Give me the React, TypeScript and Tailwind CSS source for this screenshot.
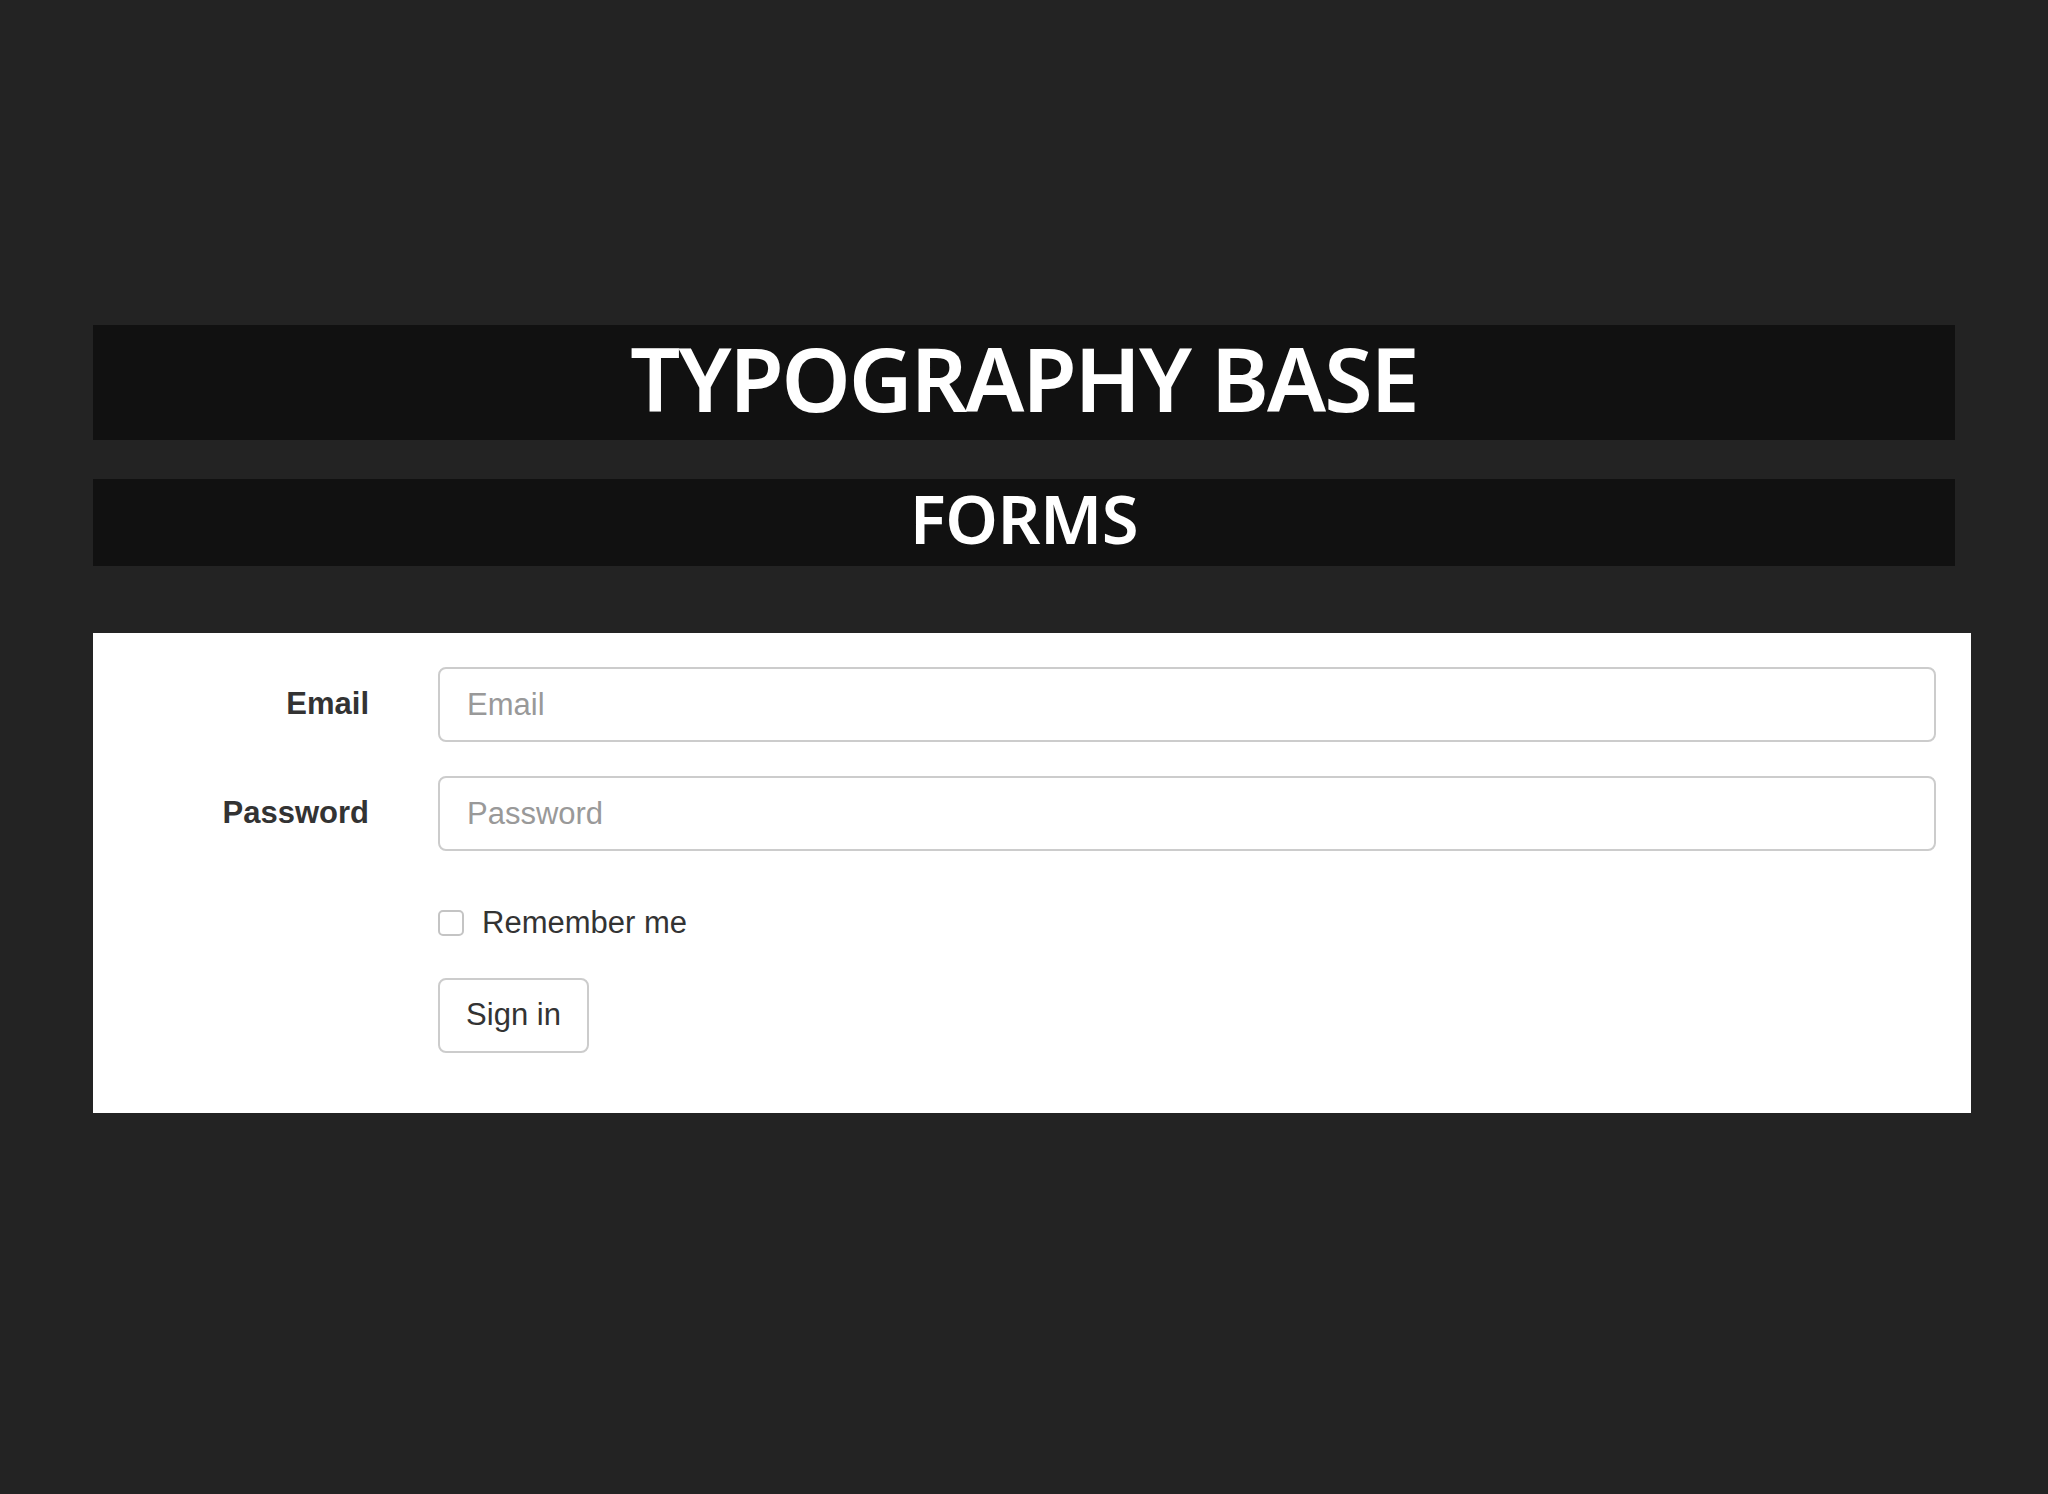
export default function App() {
  return (
    <div className="min-h-screen w-full bg-[#232323] pt-[325px] px-[93px]">
      {/* Section headings */}
      <div className="w-[1862px] h-[115px] pb-[10px] bg-[#111111] flex items-center justify-center">
        <h1 className="text-[88px] leading-none font-semibold text-white tracking-[-2px] font-['Noto_Sans',sans-serif]">
          TYPOGRAPHY BASE
        </h1>
      </div>
      <div className="w-[1862px] h-[87px] pb-[8px] mt-[39px] bg-[#111111] flex items-center justify-center">
        <h2 className="text-[67px] leading-none font-semibold text-white tracking-[-0.5px] font-['Noto_Sans',sans-serif]">
          FORMS
        </h2>
      </div>

      {/* Form panel */}
      <div className="w-[1878px] h-[480px] mt-[67px] bg-white pt-[34px] pr-[35px] font-['Liberation_Sans',Arial,sans-serif]">
        <form className="flex flex-col">
          <div className="flex items-center gap-[69px]">
            <label className="w-[276px] text-right text-[31px] font-bold text-[#333333]">Email</label>
            <input
              type="email"
              placeholder="Email"
              className="flex-1 h-[75px] px-[27px] text-[31px] text-[#555] placeholder:text-[#999999] border-2 border-[#cccccc] rounded-[8px] outline-none"
            />
          </div>
          <div className="flex items-center gap-[69px] mt-[34px]">
            <label className="w-[276px] text-right text-[31px] font-bold text-[#333333]">Password</label>
            <input
              type="password"
              placeholder="Password"
              className="flex-1 h-[75px] px-[27px] text-[31px] text-[#555] placeholder:text-[#999999] border-2 border-[#cccccc] rounded-[8px] outline-none"
            />
          </div>
          <div className="pl-[345px] mt-[56px] flex items-center gap-[18px]">
            <span className="w-[26px] h-[26px] rounded-[5px] border-2 border-[#c4c4c4] bg-white" />
            <span className="text-[31px] text-[#333333] leading-none">Remember me</span>
          </div>
          <div className="pl-[345px] mt-[40px]">
            <button
              type="button"
              className="w-[151px] h-[75px] border-2 border-[#cccccc] rounded-[8px] bg-white text-[31px] text-[#333333]"
            >
              Sign in
            </button>
          </div>
        </form>
      </div>
    </div>
  );
}
